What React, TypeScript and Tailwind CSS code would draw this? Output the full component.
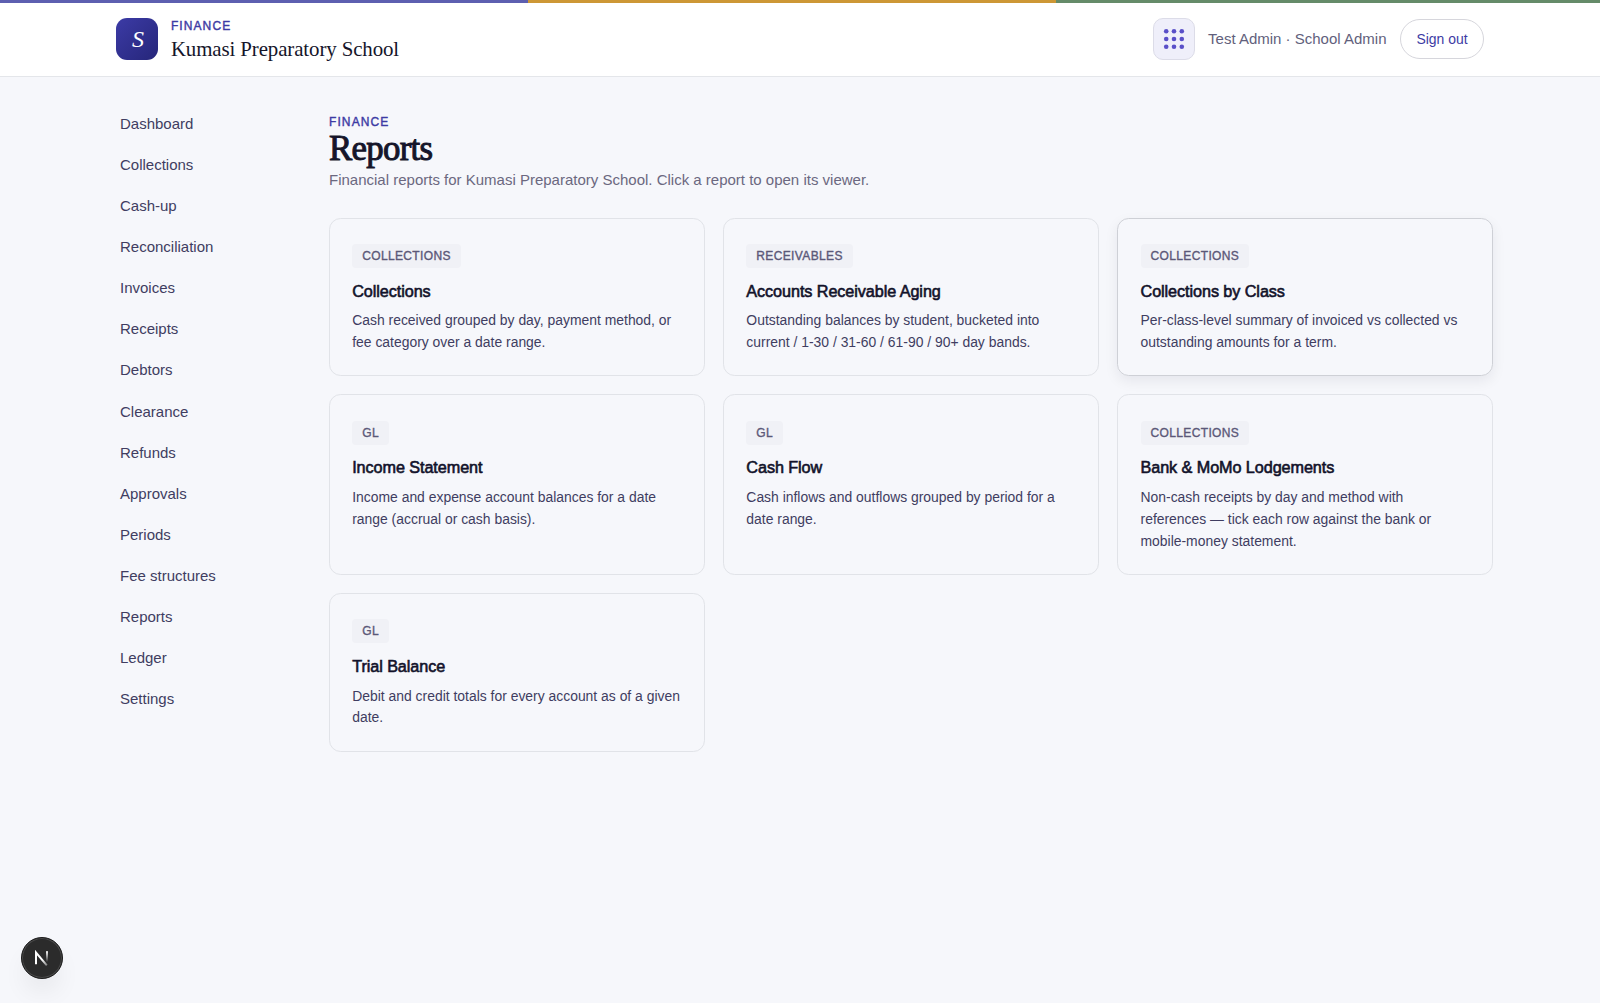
import React from 'react';

interface Report {
  tag: string;
  title: string;
  description: string;
  active?: boolean;
}

const NAV_ITEMS = [
  'Dashboard',
  'Collections',
  'Cash-up',
  'Reconciliation',
  'Invoices',
  'Receipts',
  'Debtors',
  'Clearance',
  'Refunds',
  'Approvals',
  'Periods',
  'Fee structures',
  'Reports',
  'Ledger',
  'Settings'
];

const REPORTS: Report[] = [
  {
    tag: 'COLLECTIONS',
    title: 'Collections',
    description: 'Cash received grouped by day, payment method, or fee category over a date range.'
  },
  {
    tag: 'RECEIVABLES',
    title: 'Accounts Receivable Aging',
    description: 'Outstanding balances by student, bucketed into current / 1-30 / 31-60 / 61-90 / 90+ day bands.'
  },
  {
    tag: 'COLLECTIONS',
    title: 'Collections by Class',
    description: 'Per-class-level summary of invoiced vs collected vs outstanding amounts for a term.',
    active: true
  },
  {
    tag: 'GL',
    title: 'Income Statement',
    description: 'Income and expense account balances for a date range (accrual or cash basis).'
  },
  {
    tag: 'GL',
    title: 'Cash Flow',
    description: 'Cash inflows and outflows grouped by period for a date range.'
  },
  {
    tag: 'COLLECTIONS',
    title: 'Bank & MoMo Lodgements',
    description: 'Non-cash receipts by day and method with references — tick each row against the bank or mobile-money statement.'
  },
  {
    tag: 'GL',
    title: 'Trial Balance',
    description: 'Debit and credit totals for every account as of a given date.'
  }
];

const AppsIcon: React.FC = () => (
  <svg width="22" height="22" viewBox="0 0 22 22" fill="#5a50c8">
    {[3.2, 11, 18.8].map((y) =>
      [3.2, 11, 18.8].map((x) => <circle key={`${x}-${y}`} cx={x} cy={y} r="2.3" />)
    )}
  </svg>
);

const Header: React.FC = () => (
  <header className="bg-white border-b border-[#e4e6ea] pb-px">
    <div className="flex h-[3px]">
      <div className="w-[33%] bg-[#5d5fb0]" />
      <div className="w-[33%] bg-[#cd9735]" />
      <div className="flex-1 bg-[#658b69]" />
    </div>
    <div className="flex items-center justify-between h-[72px] pl-[115.5px] pr-[116px]">
      <div className="flex items-center gap-[13.4px]">
        <div className="flex items-center justify-center w-[42px] h-[42px] rounded-[11px] bg-linear-to-br from-[#3c3ba6] to-[#26267a] text-white font-['Liberation_Serif',serif] italic text-[24px] leading-none pl-[3px]">
          S
        </div>
        <div>
          <div className="text-[12px] leading-[19px] tracking-[1.1px] text-[#3d3ba4] [-webkit-text-stroke:0.4px]">FINANCE</div>
          <div className="font-['Liberation_Serif',serif] text-[20.9px] leading-[26px] tracking-[-0.11px] text-[#15152a]">
            Kumasi Preparatory School
          </div>
        </div>
      </div>
      <div className="flex items-center">
        <button className="flex items-center justify-center w-[42px] h-[42px] rounded-[10px] bg-[#efeffa] border border-[#dcdce8]">
          <AppsIcon />
        </button>
        <span className="ml-[13.3px] text-[15px] text-[#625f7c]">Test Admin · School Admin</span>
        <button className="ml-[13.5px] w-[84px] h-10 rounded-full border border-[#d6d6dc] text-[13.95px] text-[#3d3ba4]">
          Sign out
        </button>
      </div>
    </div>
  </header>
);

const ReportCard: React.FC<{ report: Report }> = ({ report }) => (
  <a
    className={`block px-[22.2px] pt-[25.3px] pb-[21.6px] rounded-[11.6px] border ${
      report.active ? 'border-[#ced0d6] shadow-[0_5px_14px_rgba(20,20,45,0.07)]' : 'border-[#e1e3e8]'
    }`}
  >
    <span className="block w-fit h-6 px-[10px] rounded-[4px] bg-[#f0f1f6] text-[12px] leading-6 tracking-[0.36px] text-[#5b5878] [-webkit-text-stroke:0.35px]">
      {report.tag}
    </span>
    <h2 className="mt-[12.6px] text-[16.2px] leading-[21px] tracking-[-0.07px] text-[#12122a] [-webkit-text-stroke:0.6px]">
      {report.title}
    </h2>
    <p className="mt-[8.8px] text-[13.92px] leading-[21.7px] text-[#403d61]">{report.description}</p>
  </a>
);

export default function App() {
  return (
    <div className="min-h-screen bg-[#f6f7fb] font-['Liberation_Sans',Arial,sans-serif]">
      <Header />
      <div className="flex pl-[120px] pr-[107px]">
        <nav className="w-[209px] pt-[25.8px] shrink-0">
          {NAV_ITEMS.map((item) => (
            <a key={item} className="block h-[41.12px] text-[15px] leading-[41.12px] text-[#403d61]">
              {item}
            </a>
          ))}
        </nav>
        <main className="flex-1 pt-[36.6px]">
          <div className="text-[12px] leading-4 tracking-[1.1px] text-[#3d3ba4] [-webkit-text-stroke:0.4px]">FINANCE</div>
          <h1 className="font-['Liberation_Serif',serif] text-[34.8px] leading-[38px] tracking-[-0.7px] text-[#15152a] [-webkit-text-stroke:1px]">
            Reports
          </h1>
          <p className="mt-[0.6px] text-[15px] leading-[23px] text-[#6b6880]">
            Financial reports for Kumasi Preparatory School. Click a report to open its viewer.
          </p>
          <div className="grid grid-cols-3 gap-x-[18.5px] gap-y-[18.1px] mt-[26.5px]">
            {REPORTS.map((report) => (
              <ReportCard key={report.title} report={report} />
            ))}
          </div>
        </main>
      </div>

      {/* dev tools badge */}
      <button className="fixed left-[21px] bottom-[24px] flex items-center justify-center w-[42px] h-[42px] rounded-full bg-[#2b2b2b] border border-[#1b1b1b] shadow-[inset_0_0_0_1px_#494949,0_16px_28px_-8px_rgba(0,0,0,0.12)]">
        <svg width="16" height="16" viewBox="0 0 16 16" fill="none">
          <defs>
            <linearGradient id="stem" x1="0" y1="1" x2="0" y2="12" gradientUnits="userSpaceOnUse">
              <stop stopColor="#fff" />
              <stop offset="1" stopColor="#fff" stopOpacity="0" />
            </linearGradient>
            <linearGradient id="diagonal" x1="9" y1="9" x2="14" y2="16" gradientUnits="userSpaceOnUse">
              <stop stopColor="#fff" />
              <stop offset="1" stopColor="#fff" stopOpacity="0.3" />
            </linearGradient>
          </defs>
          <path d="M2 14.2V2.5L12.8 15.3" stroke="url(#diagonal)" strokeWidth="2" />
          <rect x="12" y="1.2" width="2" height="12.5" fill="url(#stem)" />
        </svg>
      </button>
    </div>
  );
}
